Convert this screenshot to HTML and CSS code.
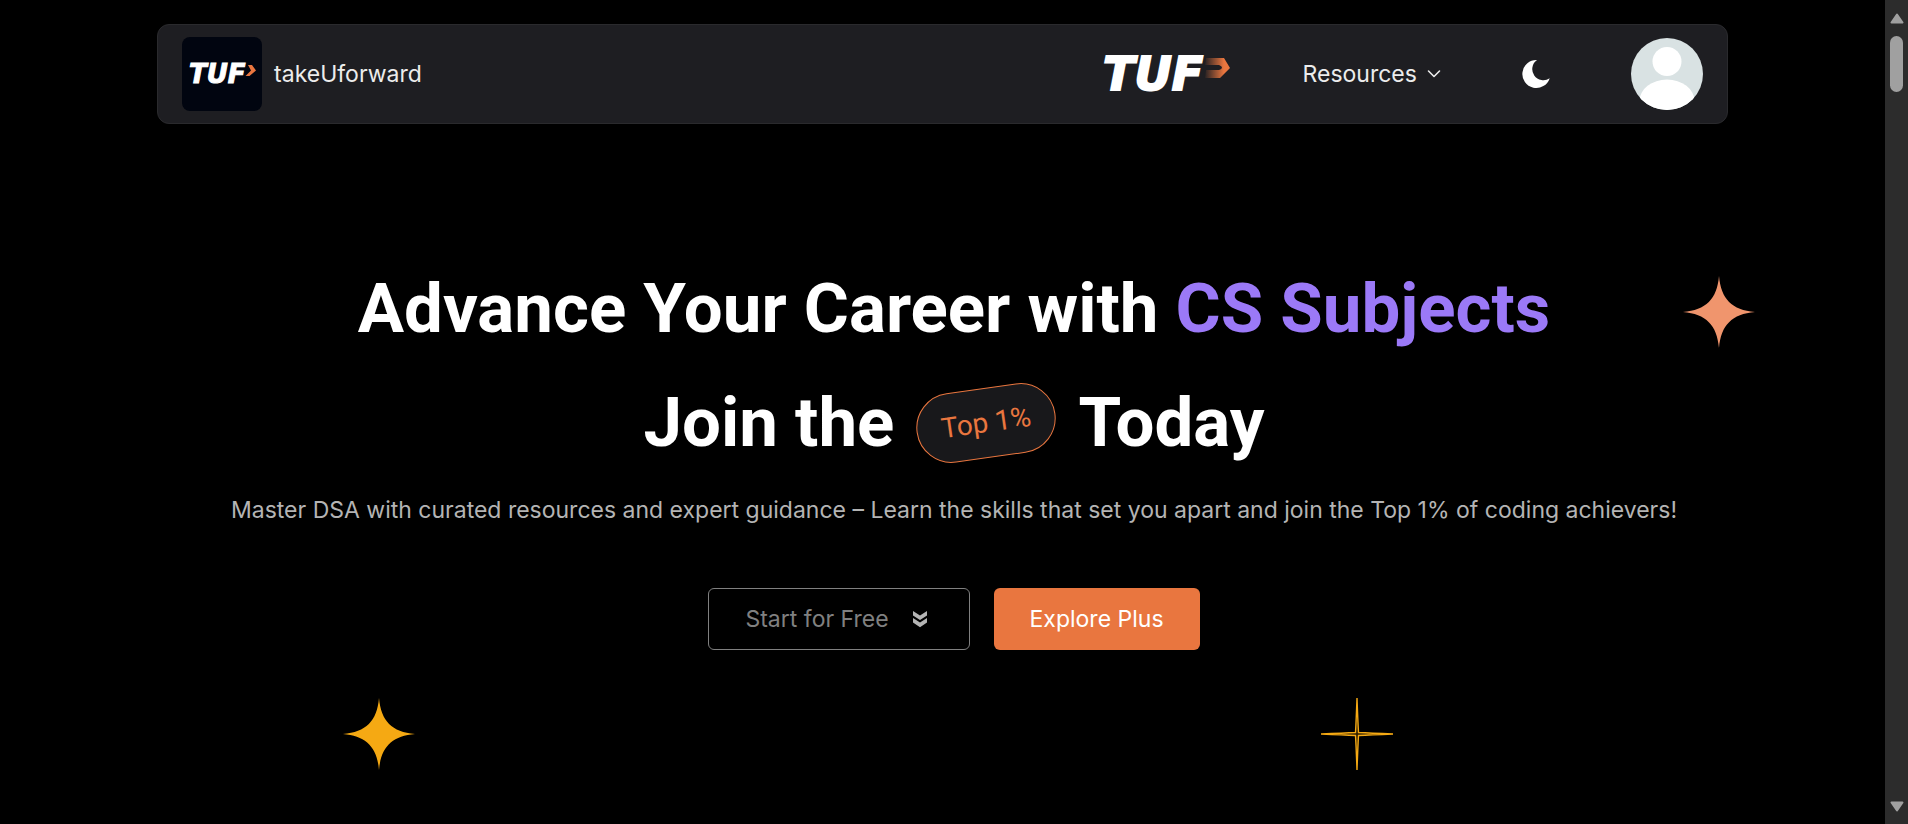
FILE: index.html
```html
<!DOCTYPE html>
<html lang="en">
<head>
<meta charset="utf-8">
<meta name="viewport" content="width=device-width, initial-scale=1">
<title>takeUforward</title>
<link rel="stylesheet" href="styles.css">
</head>
<body>
<header class="site-header">
  <nav class="navbar">
    <a class="brand" href="#">
      <svg class="brand-tile" viewBox="0 0 80 74" aria-hidden="true">
        <rect width="80" height="74" rx="8" fill="#010510"/>
        <text class="tuf" x="7" y="46" font-size="26" stroke-width="1">TUF</text>
        <path d="M66 28h4l4 5.500-6.500 5.500h-4l5.500-5.500z" fill="#e9763f"/>
      </svg>
      <span>takeUforward</span>
    </a>
    <div class="nav-items">
      <a class="plus-link" href="#" aria-label="TUF Plus">
        <svg class="plus-logo" viewBox="0 0 128 32" aria-hidden="true">
          <defs>
            <linearGradient id="fade" gradientUnits="userSpaceOnUse" x1="101" y1="0" x2="121" y2="0">
              <stop offset="0" stop-color="#e9763f" stop-opacity="0"/>
              <stop offset="1" stop-color="#e9763f"/>
            </linearGradient>
          </defs>
          <text class="tuf" x="0" y="32" font-size="46" stroke-width="2">TUF</text>
          <path d="M103 0h18l6 10-10 10h-15l1-8h13q3-1 3-2.500t-3-2.500h-14z" fill="url(#fade)"/>
        </svg>
      </a>
      <button class="menu-button" type="button">
        Resources
        <svg class="chevron" viewBox="0 0 14 8" aria-hidden="true"><path d="M1.500 1l5.500 5.500L12.500 1" fill="none" stroke="currentColor" stroke-width="1.600" stroke-linecap="round" stroke-linejoin="round"/></svg>
      </button>
      <button class="theme-button" type="button" aria-label="Toggle theme">
        <svg class="moon" viewBox="0 0 28 28" aria-hidden="true"><path d="M15 0A14 14 0 1 0 27.700 18.200A11 11 0 0 1 15 0z" fill="#fff"/></svg>
      </button>
      <button class="avatar-button" type="button" aria-label="Account">
        <svg class="avatar" viewBox="0 0 72 72" aria-hidden="true">
          <defs><clipPath id="disc"><circle cx="36" cy="36" r="36"/></clipPath></defs>
          <g clip-path="url(#disc)">
            <rect width="72" height="72" fill="#d9e2e3"/>
            <circle cx="36" cy="23.500" r="14.500" fill="#fff"/>
            <ellipse cx="36" cy="63" rx="27.500" ry="21.500" fill="#fff"/>
          </g>
        </svg>
      </button>
    </div>
  </nav>
</header>

<main class="hero">
  <h1 class="headline">
    <span class="headline-row">Advance Your Career with <span class="accent">CS Subjects</span></span>
    <span class="headline-row second">Join the <span class="pill">Top 1%</span> Today</span>
  </h1>
  <p class="lead">Master DSA with curated resources and expert guidance – Learn the skills that set you apart and join the Top 1% of coding achievers!</p>
  <div class="actions">
    <button class="btn btn-outline" type="button">
      Start for Free
      <svg class="down" viewBox="0 0 14 16" aria-hidden="true"><path d="M0 0l7 4.500L14 0v4.500L7 9 0 4.500zM0 7l7 4.500L14 7v4.500L7 16.200 0 11.500z" fill="#b4b4b4"/></svg>
    </button>
    <button class="btn btn-solid" type="button">Explore Plus</button>
  </div>
  <svg class="star star-coral" viewBox="0 0 72 72" aria-hidden="true"><path d="M36 0C38 23 49 34 72 36C49 38 38 49 36 72C34 49 23 38 0 36C23 34 34 23 36 0z" fill="#f0956d"/></svg>
  <svg class="star star-gold" viewBox="0 0 72 72" aria-hidden="true"><path d="M36 0C38 23 49 34 72 36C49 38 38 49 36 72C34 49 23 38 0 36C23 34 34 23 36 0z" fill="#f5a913"/></svg>
  <svg class="star star-line" viewBox="0 0 72 72" aria-hidden="true"><path d="M36 0C36.500 14 37 26 37.500 34.500C46 35 58 35.500 72 36C58 36.500 46 37 37.500 37.500C37 46 36.500 58 36 72C35.500 58 35 46 34.500 37.500C26 37 14 36.500 0 36C14 35.500 26 35 34.500 34.500C35 26 35.500 14 36 0z" fill="#2a1c00" stroke="#f5a913" stroke-width="1.400"/></svg>
</main>

<div class="scrollbar" aria-hidden="true">
  <svg class="scroll-arrow" viewBox="0 0 14 11"><path d="M7 1.500L12.500 9.500h-11z" fill="#a0a0a0" stroke="#a0a0a0" stroke-width="2" stroke-linejoin="round"/></svg>
  <div class="scroll-track"><div class="scroll-thumb"></div></div>
  <svg class="scroll-arrow" viewBox="0 0 14 11"><path d="M7 9.500L12.500 1.500h-11z" fill="#a0a0a0" stroke="#a0a0a0" stroke-width="2" stroke-linejoin="round"/></svg>
</div>
</body>
</html>
```
FILE: styles.css
```css
* {
  box-sizing: border-box;
}

body {
  margin: 0;
  min-height: 100vh;
  display: flex;
  flex-direction: column;
  background: #000;
  color: #fff;
  font-family: Inter, "Open Sans", sans-serif;
  font-size: 23px;
  line-height: 36px;
}

button {
  border: 0;
  padding: 0;
  background: none;
  color: inherit;
  font: inherit;
  cursor: pointer;
}

a {
  color: inherit;
  text-decoration: none;
}

svg {
  display: block;
  flex: none;
  overflow: visible;
}

.tuf {
  fill: #fff;
  stroke: #fff;
  font-family: "DejaVu Sans", sans-serif;
  font-style: italic;
  font-weight: 700;
}

.site-header {
  padding: 24px 23px 0 0;
}

.navbar {
  display: flex;
  align-items: center;
  justify-content: space-between;
  width: 83.333%;
  margin: 0 auto;
  padding: 12px 24px;
  border: 1px solid #2a2a2d;
  border-radius: 12px;
  background: #1e1e22;
  color: #ececec;
}

.brand {
  display: flex;
  align-items: center;
  gap: 12px;
}

.brand-tile {
  width: 80px;
  height: 74px;
}

.nav-items {
  display: flex;
  align-items: center;
  gap: 72px;
}

.plus-logo {
  width: 128px;
  height: 32px;
}

.menu-button {
  display: flex;
  align-items: center;
  gap: 10px;
}

.chevron {
  width: 14px;
  height: 8px;
}

.theme-button {
  display: grid;
  place-items: center;
  width: 46px;
  height: 46px;
}

.moon {
  width: 28px;
  height: 28px;
}

.avatar {
  width: 72px;
  height: 72px;
}

.hero {
  position: relative;
  flex: 1;
  display: flex;
  flex-direction: column;
  align-items: center;
  padding: 128px 24px 0;
  text-align: center;
}

.headline {
  margin: 0 0 12px;
  font-family: Roboto, sans-serif;
  font-size: 69px;
  font-weight: 700;
  line-height: 114px;
}

.headline-row {
  display: block;
}

.second {
  display: flex;
  align-items: center;
  justify-content: center;
  gap: 22px;
}

.accent {
  color: #9b79f7;
}

.pill {
  padding: 16px 24px;
  border: 1px solid #e9763f;
  border-radius: 36px;
  background: #18181b;
  color: #e9763f;
  font-size: 28px;
  font-weight: 400;
  line-height: 36px;
  transform: rotate(-8deg);
}

.lead {
  margin: 0 0 60px;
  color: #b4b4b4;
}

.actions {
  display: flex;
  gap: 24px;
}

.btn {
  display: flex;
  align-items: center;
  gap: 24px;
  height: 62px;
  padding: 0 36px;
  border-radius: 6px;
}

.btn-outline {
  padding-right: 42px;
  border: 1px solid #808080;
  color: #808080;
}

.btn-solid {
  background: #e9763f;
  color: #fff;
}

.down {
  width: 14px;
  height: 16px;
}

.star {
  position: absolute;
  width: 72px;
  height: 72px;
}

.star-coral {
  top: 152px;
  right: 8%;
}

.star-gold {
  top: 574px;
  left: 18%;
}

.star-line {
  top: 574px;
  right: 27%;
}

.scrollbar {
  position: fixed;
  top: 0;
  right: 0;
  bottom: 0;
  display: flex;
  flex-direction: column;
  align-items: center;
  gap: 12px;
  width: 23px;
  padding: 13px 0 12px;
  background: #2c2c2c;
}

.scroll-arrow {
  width: 14px;
  height: 11px;
}

.scroll-track {
  flex: 1;
  width: 13px;
}

.scroll-thumb {
  height: 56px;
  border-radius: 7px;
  background: #a0a0a0;
}
```
